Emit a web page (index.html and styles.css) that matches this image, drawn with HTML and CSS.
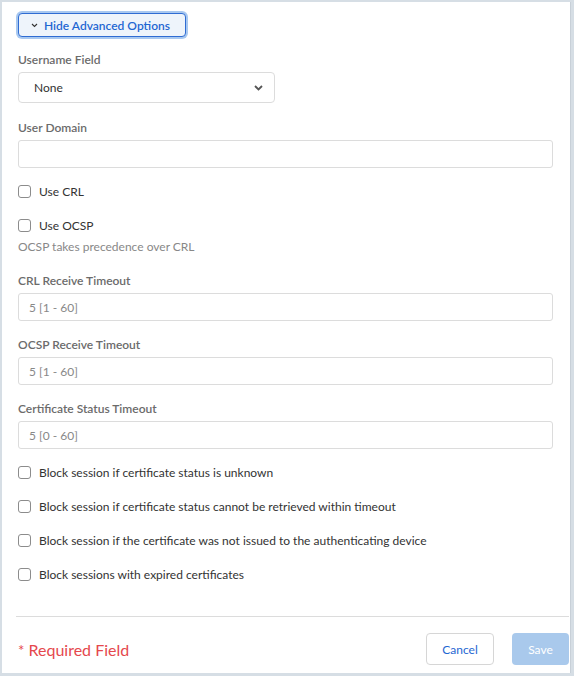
FILE: index.html
```html
<!DOCTYPE html>
<html lang="en">
<head>
    <meta charset="UTF-8">
    <meta name="viewport" content="width=device-width, initial-scale=1.0">
    <title>Certificate Profile</title>
    <link rel="stylesheet" href="styles.css">
</head>
<body>
    <div class="panel">
        <div class="form">
            <button class="toggle-button" type="button">
                <svg class="toggle-icon" width="7" height="5" viewBox="0 0 7 5"><path d="M1 1 L3.5 3.5 L6 1" fill="none" stroke="#333" stroke-width="1.1"/></svg>
                Hide Advanced Options
            </button>

            <div class="field first">
                <label class="field-label">Username Field</label>
                <div class="select">
                    <span>None</span>
                    <svg width="9" height="6" viewBox="0 0 9 6"><path d="M1 1 L4.5 4.5 L8 1" fill="none" stroke="#555" stroke-width="1.8"/></svg>
                </div>
            </div>

            <div class="field domain">
                <label class="field-label">User Domain</label>
                <input class="text-input" type="text">
            </div>

            <label class="check-row first-check"><span class="check-box"></span>Use CRL</label>
            <label class="check-row"><span class="check-box"></span>Use OCSP</label>
            <p class="help-text">OCSP takes precedence over CRL</p>

            <div class="field after-help">
                <label class="field-label">CRL Receive Timeout</label>
                <input class="text-input" type="text" placeholder="5 [1 - 60]">
            </div>

            <div class="field">
                <label class="field-label">OCSP Receive Timeout</label>
                <input class="text-input" type="text" placeholder="5 [1 - 60]">
            </div>

            <div class="field">
                <label class="field-label">Certificate Status Timeout</label>
                <input class="text-input" type="text" placeholder="5 [0 - 60]">
            </div>

            <label class="check-row first-check"><span class="check-box"></span>Block session if certificate status is unknown</label>
            <label class="check-row"><span class="check-box"></span>Block session if certificate status cannot be retrieved within timeout</label>
            <label class="check-row"><span class="check-box"></span>Block session if the certificate was not issued to the authenticating device</label>
            <label class="check-row"><span class="check-box"></span>Block sessions with expired certificates</label>
        </div>

        <div class="footer">
            <span class="required"><span class="star">*</span> Required Field</span>
            <div class="actions">
                <button class="cancel" type="button">Cancel</button>
                <button class="save" type="button" disabled>Save</button>
            </div>
        </div>
    </div>
</body>
</html>
```

FILE: styles.css
```css
body {
    margin: 0;
    padding: 2px 0 0 2px;
    background-color: #d6dee5;
    font-family: Lato, "Open Sans", sans-serif;
    font-size: 12px;
    color: #333;
}

.panel {
    box-sizing: border-box;
    width: 569px;
    height: 671px;
    background-color: #fff;
    border-right: 1px solid #c8d0d8;
}

.form {
    padding: 11px 17px 0 16px;
    height: 614px;
    box-sizing: border-box;
}

.toggle-button {
    display: flex;
    align-items: center;
    gap: 6px;
    height: 24px;
    width: 168px;
    padding: 0 0 0 12px;
    background-color: #eef4fb;
    border: 1.5px solid #2f6cd3;
    border-radius: 4px;
    box-shadow: 0 0 0 2px #a8c8f0;
    color: #1f67d2;
    font-family: inherit;
    font-size: 12px;
    font-weight: 600;
    cursor: pointer;
}

.field {
    margin-top: 16px;
}

.field.first {
    margin-top: 15px;
}

.field.domain {
    margin-top: 17px;
}

.field.after-help {
    margin-top: 18px;
}

.field-label {
    display: block;
    line-height: 16px;
    font-weight: 600;
    color: #6b6b6b;
    margin-bottom: 4px;
}

.select {
    box-sizing: border-box;
    display: flex;
    align-items: center;
    justify-content: space-between;
    width: 257px;
    height: 31px;
    padding: 0 11px 0 15px;
    border: 1px solid #dcdcdc;
    border-radius: 4px;
    color: #333;
}

.text-input {
    display: block;
    box-sizing: border-box;
    width: 100%;
    height: 28px;
    margin: 0;
    padding: 0 10px;
    border: 1px solid #dcdcdc;
    border-radius: 3px;
    font-family: inherit;
    font-size: 12px;
    color: #333;
}

.text-input::placeholder {
    color: #888;
}

.check-row {
    display: flex;
    align-items: center;
    gap: 8px;
    height: 16px;
    margin-top: 18px;
    color: #333;
}

.check-row.first-check {
    margin-top: 15px;
}

.check-box {
    box-sizing: border-box;
    width: 13px;
    height: 13px;
    border: 1px solid #8c8c8c;
    border-radius: 3px;
    background-color: #fff;
}

.help-text {
    margin: 6px 0 0;
    line-height: 16px;
    color: #888;
}

.footer {
    display: flex;
    align-items: center;
    justify-content: space-between;
    margin: 0 1px 0 14px;
    padding: 16px 0 0 2px;
    border-top: 1px solid #dcdcdc;
}

.required {
    font-size: 16px;
    color: #e5484d;
}

.star {
    font-size: 15px;
}

.actions {
    display: flex;
    gap: 18px;
}

.actions button {
    height: 32px;
    border-radius: 4px;
    font-family: inherit;
    font-size: 12px;
    cursor: pointer;
}

.cancel {
    width: 68px;
    background-color: #fff;
    border: 1px solid #d6d6d6;
    color: #1f67d2;
}

.save {
    width: 57px;
    background-color: #a9c9ec;
    border: none;
    color: #fff;
}
```
